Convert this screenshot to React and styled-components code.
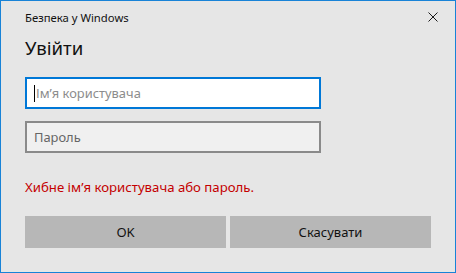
import React from "react";
import styled, { createGlobalStyle } from "styled-components";

const GlobalStyle = createGlobalStyle`
  html, body {
    margin: 0;
    padding: 0;
    background: #e6e6e6;
  }
  * {
    box-sizing: border-box;
  }
`;

const StyledWindow = styled.div`
  width: 456px;
  height: 273px;
  border: 1px solid #1883d7;
  background: #e6e6e6;
  font-family: "Noto Sans", "Open Sans", sans-serif;
  color: #000;
  display: flex;
  flex-direction: column;
  padding: 0 24px;
`;

const StyledTitleBar = styled.div`
  height: 32px;
  display: flex;
  align-items: center;
  justify-content: space-between;
`;

const StyledCaption = styled.span`
  font-size: 11.3px;
  color: #111;
`;

const StyledClose = styled.button`
  background: transparent;
  border: none;
  padding: 0;
  margin-right: -7px;
  width: 10px;
  height: 10px;
  display: flex;
  svg {
    width: 10px;
    height: 10px;
    stroke: #1a1a1a;
  }
`;

const StyledHeading = styled.h1`
  margin: 1px 0 0;
  font-size: 18.6px;
  font-weight: 400;
  line-height: 28px;
  color: #111;
`;

const StyledFields = styled.div`
  margin-top: 15px;
  display: flex;
  flex-direction: column;
  gap: 12px;
  width: 296px;
`;

const StyledInput = styled.div`
  height: 32px;
  display: flex;
  align-items: center;
  padding-left: 7px;
  border: 2px solid ${(p) => (p.$focused ? "#0078d7" : "#8a8a8a")};
  background: ${(p) => (p.$focused ? "#ffffff" : "#f0f0f0")};
  font-size: 12.9px;
  color: ${(p) => (p.$focused ? "#8c8c8c" : "#666666")};
`;

const StyledCaret = styled.span`
  width: 1px;
  height: 17px;
  background: #000;
  margin-right: 1px;
`;

const StyledError = styled.p`
  margin: 25px 0 0;
  font-size: 13.2px;
  line-height: 18px;
  color: #c40000;
`;

const StyledButtons = styled.div`
  margin-top: 20px;
  display: grid;
  grid-template-columns: 1fr 1fr;
  gap: 4px;
`;

const StyledButton = styled.button`
  height: 32px;
  border: none;
  padding: 0;
  background: #b7b7b7;
  font-family: inherit;
  font-size: 13px;
  color: #111;
`;

export default function App() {
  return (
    <>
      <GlobalStyle />
      <StyledWindow>
        <StyledTitleBar>
          <StyledCaption>Безпека у Windows</StyledCaption>
          <StyledClose aria-label="Закрити">
            <svg viewBox="0 0 10 10" fill="none" strokeWidth="1">
              <path d="M0.5 0.5L9.5 9.5M9.5 0.5L0.5 9.5" />
            </svg>
          </StyledClose>
        </StyledTitleBar>
        <StyledHeading>Увійти</StyledHeading>
        <StyledFields>
          <StyledInput $focused>
            <StyledCaret />
            Ім’я користувача
          </StyledInput>
          <StyledInput>Пароль</StyledInput>
        </StyledFields>
        <StyledError>Хибне ім’я користувача або пароль.</StyledError>
        <StyledButtons>
          <StyledButton>OK</StyledButton>
          <StyledButton>Скасувати</StyledButton>
        </StyledButtons>
      </StyledWindow>
    </>
  );
}
